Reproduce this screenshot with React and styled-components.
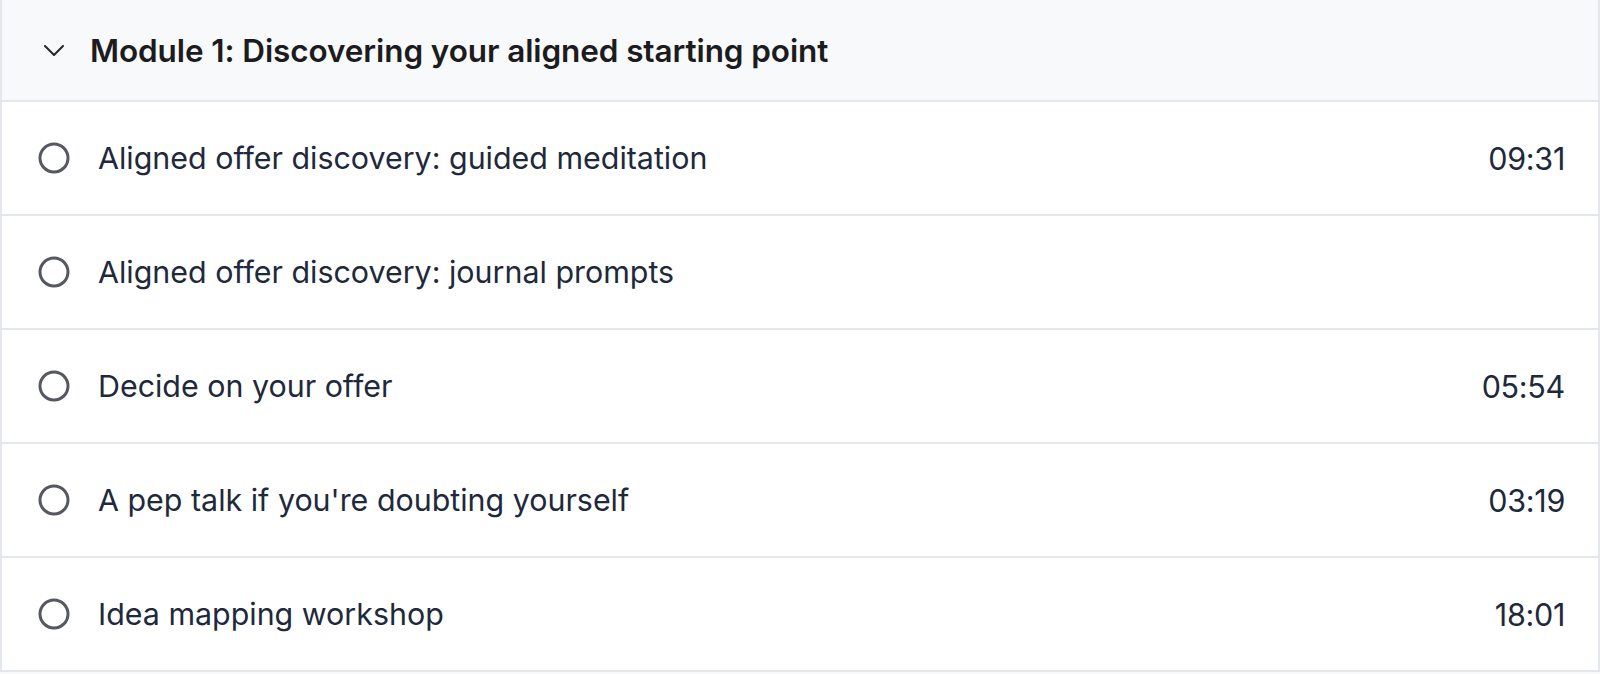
import React from "react";
import styled, { createGlobalStyle } from "styled-components";

const GlobalStyle = createGlobalStyle`
  html, body {
    margin: 0;
    padding: 0;
    background: #f8f9fa;
  }
  body {
    font-family: Inter, "Noto Sans", "Liberation Sans", sans-serif;
    -webkit-font-smoothing: antialiased;
  }
`;

const Module = styled.section`
  width: 100%;
  box-sizing: border-box;
  border-left: 2px solid #e4e7eb;
  border-right: 2px solid #e4e7eb;
  background: #ffffff;
`;

const Header = styled.div`
  display: flex;
  align-items: center;
  height: 100px;
  box-sizing: content-box;
  padding-left: 42px;
  gap: 26px;
  background: #f8f9fa;
  border-bottom: 2px solid #e4e7eb;
`;

const Title = styled.h2`
  margin: 0;
  font-size: 31.5px;
  font-weight: 600;
  color: #1c1c1f;
  letter-spacing: -0.1px;
`;

const Lessons = styled.ul`
  list-style: none;
  margin: 0;
  padding: 0;
`;

const Lesson = styled.li`
  display: flex;
  align-items: center;
  height: 112px;
  padding: 0 33px 0 36px;
  gap: 28px;
  border-bottom: 2px solid #e4e7eb;
`;

const LessonTitle = styled.span`
  flex: 1;
  font-size: 30.4px;
  font-weight: 400;
  color: #1e293b;
`;

const Duration = styled.span`
  font-size: 30.5px;
  font-weight: 400;
  color: #1e293b;
  letter-spacing: -0.3px;
`;

const Chevron = () => (
  <svg width="20" height="11" viewBox="0 0 20 11" fill="none">
    <polyline
      points="1,1 10,10 19,1"
      stroke="#27272a"
      strokeWidth="2"
      strokeLinecap="round"
      strokeLinejoin="round"
    />
  </svg>
);

const Radio = () => (
  <svg width="32" height="32" viewBox="0 0 32 32" fill="none">
    <circle cx="16" cy="16" r="14" stroke="#55585f" strokeWidth="3" />
  </svg>
);

const lessons = [
  { title: "Aligned offer discovery: guided meditation", duration: "09:31" },
  { title: "Aligned offer discovery: journal prompts", duration: "" },
  { title: "Decide on your offer", duration: "05:54" },
  { title: "A pep talk if you're doubting yourself", duration: "03:19" },
  { title: "Idea mapping workshop", duration: "18:01" },
];

export default function App() {
  return (
    <>
      <GlobalStyle />
      <Module>
        <Header>
          <Chevron />
          <Title>Module 1: Discovering your aligned starting point</Title>
        </Header>
        <Lessons>
          {lessons.map((l) => (
            <Lesson key={l.title}>
              <Radio />
              <LessonTitle>{l.title}</LessonTitle>
              {l.duration && <Duration>{l.duration}</Duration>}
            </Lesson>
          ))}
        </Lessons>
      </Module>
    </>
  );
}
